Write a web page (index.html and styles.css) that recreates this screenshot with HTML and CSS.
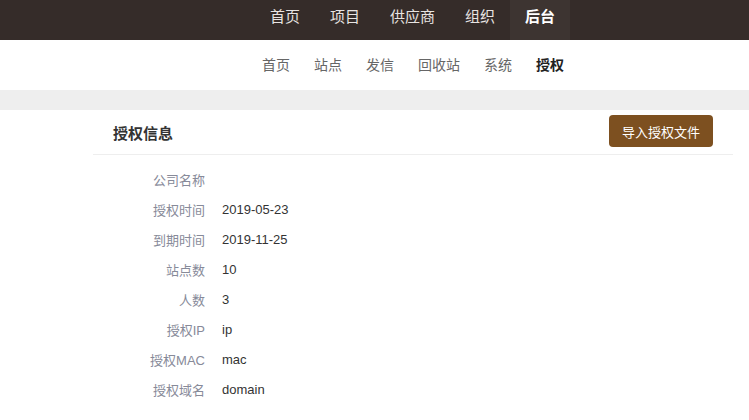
FILE: index.html
```html
<!DOCTYPE html>
<html lang="zh-CN">
<head>
    <meta charset="UTF-8">
    <title>授权</title>
    <link rel="stylesheet" href="styles.css">
</head>
<body>

<div class="topbar">
    <ul class="mainnav">
        <li>首页</li>
        <li>项目</li>
        <li>供应商</li>
        <li>组织</li>
        <li class="active">后台</li>
    </ul>
</div>

<div class="subbar">
    <ul class="subnav">
        <li>首页</li>
        <li>站点</li>
        <li>发信</li>
        <li>回收站</li>
        <li>系统</li>
        <li class="active">授权</li>
    </ul>
</div>

<div class="band"></div>

<div class="panel">
    <div class="panel-head">
        <h3>授权信息</h3>
        <button type="button">导入授权文件</button>
    </div>
    <div class="info">
        <div class="row"><span class="label">公司名称</span><span class="value"></span></div>
        <div class="row"><span class="label">授权时间</span><span class="value">2019-05-23</span></div>
        <div class="row"><span class="label">到期时间</span><span class="value">2019-11-25</span></div>
        <div class="row"><span class="label">站点数</span><span class="value">10</span></div>
        <div class="row"><span class="label">人数</span><span class="value">3</span></div>
        <div class="row"><span class="label">授权IP</span><span class="value">ip</span></div>
        <div class="row"><span class="label">授权MAC</span><span class="value">mac</span></div>
        <div class="row"><span class="label">授权域名</span><span class="value">domain</span></div>
    </div>
</div>

</body>
</html>
```

FILE: styles.css
```css
body {
    margin: 0;
    font-family: "Liberation Sans", "Noto Sans CJK SC", sans-serif;
    background-color: #fff;
    color: #333;
}
ul {
    list-style: none;
    margin: 0;
    padding: 0;
}
.topbar {
    height: 40px;
    background-color: #352c29;
}
.mainnav {
    display: flex;
    height: 40px;
    padding-left: 255px;
}
.mainnav li {
    padding: 0 15px;
    line-height: 33px;
    font-size: 15px;
    color: #e8e4e2;
}
.mainnav li.active {
    background-color: #3d3431;
    color: #fff;
    font-weight: bold;
}
.subbar {
    height: 50px;
}
.subnav {
    display: flex;
    gap: 24px;
    padding-left: 262px;
}
.subnav li {
    line-height: 50px;
    font-size: 14px;
    color: #666;
}
.subnav li.active {
    color: #222;
    font-weight: bold;
}
.band {
    height: 20px;
    background-color: #eee;
}
.panel {
    margin: 0 16px 0 93px;
}
.panel-head {
    display: flex;
    justify-content: space-between;
    align-items: center;
    height: 44px;
    padding: 0 20px;
    border-bottom: 1px solid #eee;
}
.panel-head h3 {
    margin: 0;
    font-size: 15px;
    color: #333;
}
.panel-head button {
    width: 104px;
    height: 32px;
    margin-top: -2px;
    border: none;
    border-radius: 4px;
    background-color: #7d5020;
    color: #fff;
    font-family: inherit;
    font-size: 13px;
}
.info {
    padding-top: 9px;
}
.row {
    display: flex;
    height: 30px;
    align-items: center;
    font-size: 13px;
}
.label {
    width: 112px;
    text-align: right;
    color: #878a99;
}
.value {
    margin-left: 17px;
    color: #333;
}
```
